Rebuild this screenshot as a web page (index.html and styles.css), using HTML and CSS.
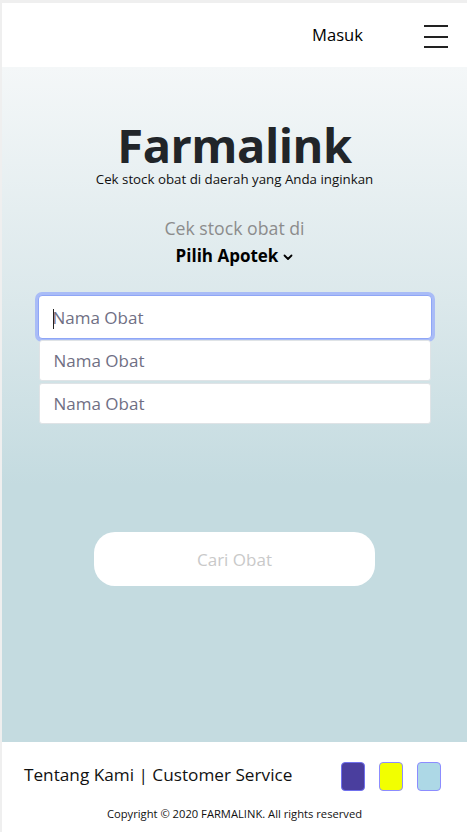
FILE: index.html
```html
<!DOCTYPE html>
<html lang="id">
<head>
<meta charset="utf-8">
<title>Farmalink</title>
<link rel="stylesheet" href="styles.css">
</head>
<body>
<div class="page">
  <header class="topbar">
    <a class="login" href="#">Masuk</a>
    <button class="burger" aria-label="Menu">
      <span></span><span></span><span></span>
    </button>
  </header>
  <main class="hero">
    <h1 class="brand">Farmalink</h1>
    <p class="tagline">Cek stock obat di daerah yang Anda inginkan</p>
    <p class="label">Cek stock obat di</p>
    <div class="picker">Pilih Apotek
      <svg class="chev" width="10" height="7" viewBox="0 0 10 7"><path d="M1.5 1.5 L5 5 L8.5 1.5" fill="none" stroke="#000" stroke-width="1.8" stroke-linecap="round" stroke-linejoin="round"/></svg>
    </div>
    <div class="fields">
      <div class="field focus"><span class="caret"></span><span class="ph">Nama Obat</span></div>
      <div class="field"><span class="ph">Nama Obat</span></div>
      <div class="field"><span class="ph">Nama Obat</span></div>
    </div>
    <button class="search">Cari Obat</button>
  </main>
  <footer class="foot">
    <div class="foot-row">
      <div class="links">Tentang Kami | Customer Service</div>
      <div class="swatches">
        <span class="sw purple"></span>
        <span class="sw yellow"></span>
        <span class="sw blue"></span>
      </div>
    </div>
    <p class="copy">Copyright © 2020 FARMALINK. All rights reserved</p>
  </footer>
</div>
</body>
</html>
```
FILE: styles.css
```css
* { box-sizing: border-box; }
html, body { margin: 0; padding: 0; }
body {
  background: #efefef;
  font-family: "Open Sans", "Noto Sans", sans-serif;
  color: #212529;
}
.page {
  margin-left: 2px;
  padding-top: 3px;
  height: 832px;
  display: flex;
  flex-direction: column;
}
.topbar {
  height: 64px;
  background: #fff;
  display: flex;
  align-items: center;
  justify-content: flex-end;
  padding-right: 19px;
}
.login {
  color: #000;
  text-decoration: none;
  font-size: 16.6px;
  margin-right: 61px;
  margin-top: -2px;
}
.burger {
  width: 24px;
  height: 23px;
  padding: 0;
  border: 0;
  background: none;
  display: flex;
  flex-direction: column;
  justify-content: space-between;
  margin-top: 3px;
}
.burger span {
  display: block;
  height: 2px;
  background: #222;
}
.hero {
  height: 675px;
  background: linear-gradient(to bottom, #f4f7f8 0%, #dbe8eb 35%, #c4dbe0 62%, #c4dbe0 100%);
  display: flex;
  flex-direction: column;
  align-items: center;
}
.brand {
  margin: 53px 0 0;
  font-size: 47px;
  line-height: 50px;
  font-weight: 700;
  color: #212529;
  letter-spacing: -0.5px;
}
.tagline {
  margin: 0;
  font-size: 13.3px;
  line-height: 18px;
  color: #111;
}
.label {
  margin: 28px 0 0;
  font-size: 17.7px;
  line-height: 24px;
  color: #8c8c8c;
}
.picker {
  margin-top: 4px;
  font-size: 17px;
  line-height: 24px;
  font-weight: 700;
  color: #000;
  display: flex;
  align-items: center;
  gap: 5px;
}
.chev { margin-top: 2px; }
.fields {
  margin-top: 27px;
  width: 394px;
  display: flex;
  flex-direction: column;
  gap: 2px;
}
.field {
  height: 41px;
  background: #fff;
  border: 1px solid #dfe3e6;
  border-radius: 3px;
  display: flex;
  align-items: center;
  padding-left: 14px;
  margin: 0 1px;
  position: relative;
}
.field.focus {
  height: 44px;
  margin: 0 0 -1px;
  border-color: #8fa6f6;
  box-shadow: 0 0 0 3px #a9bcf7;
  border-radius: 4px;
}
.ph {
  font-size: 17px;
  color: #6f6f84;
}
.caret {
  position: absolute;
  left: 14px;
  top: 13px;
  width: 1px;
  height: 20px;
  background: #222;
}
.search {
  margin-top: 108px;
  width: 281px;
  height: 54px;
  border: 0;
  border-radius: 21px;
  background: #fff;
  font-family: inherit;
  font-size: 17px;
  color: #c9c9c9;
}
.foot {
  flex: 1;
  background: #fff;
  padding: 20px 26px 0 22px;
}
.foot-row {
  display: flex;
  justify-content: space-between;
  align-items: center;
}
.links {
  font-size: 17.2px;
  color: #111;
  margin-top: -5px;
}
.swatches {
  display: flex;
  gap: 14px;
}
.sw {
  width: 24px;
  height: 29px;
  border-radius: 4px;
  border: 1px solid #8c8cff;
}
.sw.purple { background: #4a3e9e; border-color: #7070ee; }
.sw.yellow { background: #f2ff00; }
.sw.blue { background: #add8e6; }
.copy {
  margin: 15px 0 0;
  text-align: center;
  font-size: 11.2px;
  color: #111;
  padding-left: 4px;
}
```
